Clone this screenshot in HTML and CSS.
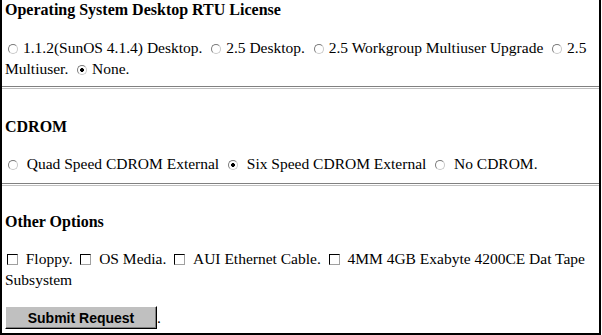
FILE: index.html
```html
<!DOCTYPE html>
<html>
<head>
<meta charset="utf-8">
<link rel="stylesheet" href="styles.css">
</head>
<body>
<form class="frame">
  <h3 class="sec-title sec-first">Operating System Desktop RTU License</h3>
  <p class="opts"><input class="rad" type="radio" name="os"> 1.1.2(SunOS 4.1.4) Desktop. <input class="rad" type="radio" name="os"> 2.5 Desktop. <input class="rad" type="radio" name="os"> 2.5 Workgroup Multiuser Upgrade <input class="rad" type="radio" name="os"> 2.5 Multiuser. <input class="rad" type="radio" name="os" checked> None.</p>
  <hr class="rule rule-1">
  <h3 class="sec-title sec-cdrom">CDROM</h3>
  <p class="opts opts-cdrom"><input class="rad" type="radio" name="cd"> &nbsp;Quad Speed CDROM External <input class="rad" type="radio" name="cd" checked> &nbsp;Six Speed CDROM External <input class="rad" type="radio" name="cd"> &nbsp;No CDROM.</p>
  <hr class="rule rule-2">
  <h3 class="sec-title sec-other">Other Options</h3>
  <p class="opts opts-check"><input class="chk" type="checkbox"> &nbsp;Floppy. <input class="chk" type="checkbox"> &nbsp;OS Media. <input class="chk" type="checkbox"> &nbsp;AUI Ethernet Cable. <input class="chk" type="checkbox"> &nbsp;4MM 4GB Exabyte 4200CE Dat Tape Subsystem</p>
  <p class="submit-row"><button class="submit" type="button">Submit Request</button>.</p>
</form>
</body>
</html>
```
FILE: styles.css
```css
html, body {
  margin: 0;
  padding: 0;
  background: #fff;
}
body {
  font-family: "Liberation Serif", "Times New Roman", serif;
  font-size: 15.5px;
  color: #000;
}
.frame {
  box-sizing: border-box;
  width: 601px;
  height: 335px;
  margin: 0;
  border: 2px solid #000;
  border-top: none;
  padding: 0 0 0 3px;
  overflow: hidden;
}
.sec-title {
  font-size: 16px;
  font-weight: bold;
  line-height: 20px;
  margin: 0;
}
.sec-cdrom {
  margin-top: 28px;
}
.sec-other {
  margin-top: 26px;
}
.opts {
  margin: 17px 0 0 0;
  line-height: 21px;
}
.opts-cdrom {
  margin-top: 16px;
}
.opts-check {
  margin-top: 16px;
}
.rule {
  margin: 7px 0 0 -3px;
  height: 1px;
  border: none;
  border-top: 1px solid #808080;
  border-bottom: 1px solid #c0c0c0;
  background: #fff;
}
.rule-2 {
  margin-top: 9px;
}
.rad {
  -webkit-appearance: none;
  appearance: none;
  box-sizing: border-box;
  display: inline-block;
  width: 10px;
  height: 10px;
  margin: 0 1px 0 5px;
  padding: 0;
  border: 1px solid;
  border-color: #7a7a7a #c8c8c8 #c8c8c8 #7a7a7a;
  border-radius: 50%;
  background: #fff;
  vertical-align: -1px;
}
.rad:first-child {
  margin-left: 3px;
}
.rad:checked {
  background: radial-gradient(circle at center, #000 0, #000 1.6px, #fff 2.2px);
}
.chk {
  -webkit-appearance: none;
  appearance: none;
  box-sizing: border-box;
  display: inline-block;
  width: 11px;
  height: 11px;
  margin: 0 0 0 4px;
  padding: 0;
  border: 1px solid;
  border-color: #000 #a0a0a0 #a0a0a0 #000;
  background: #fff;
  vertical-align: -1px;
}
.chk:first-child {
  margin-left: 2px;
}
.submit-row {
  margin: 16px 0 0 0;
  line-height: 23px;
}
.submit {
  box-sizing: border-box;
  width: 152px;
  height: 23px;
  margin: 0;
  padding: 0;
  font-family: "Liberation Sans", Arial, sans-serif;
  font-size: 14px;
  font-weight: bold;
  color: #000;
  background: #c0c0c0;
  border: 1px solid;
  border-color: #fff #000 #000 #fff;
  box-shadow: inset -1px -1px 0 #808080;
  vertical-align: bottom;
}
```
